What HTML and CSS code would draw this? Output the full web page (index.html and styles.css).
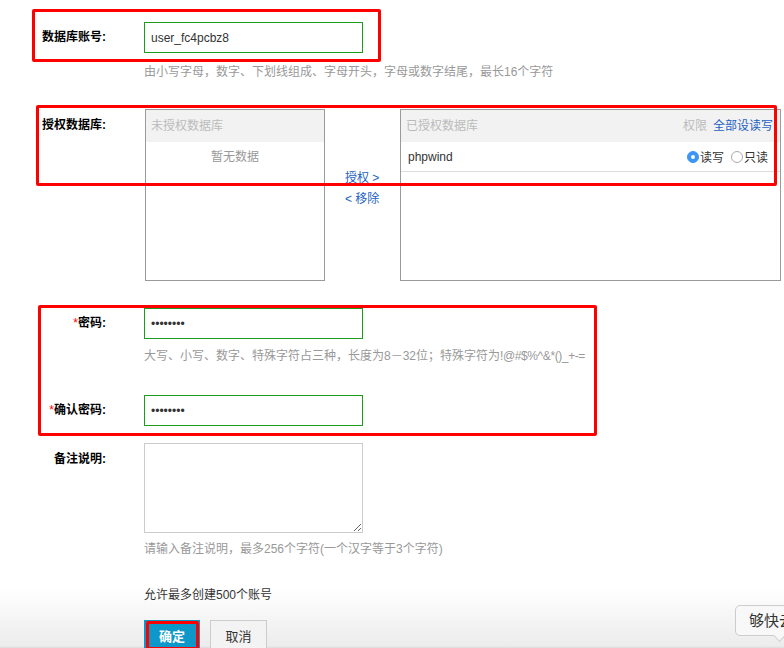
FILE: index.html
```html
<!DOCTYPE html>
<html lang="zh-CN">
<head>
<meta charset="utf-8">
<title>数据库账号</title>
<link rel="stylesheet" href="styles.css">
</head>
<body>
<div class="form">
  <div class="row r1">
    <label class="lbl">数据库账号:</label>
    <div class="field">
      <input class="txt" type="text" value="user_fc4pcbz8">
      <div class="hint">由小写字母，数字、下划线组成、字母开头，字母或数字结尾，最长16个字符</div>
    </div>
  </div>

  <div class="row r2">
    <label class="lbl lbl-db">授权数据库:</label>
    <div class="dual">
      <div class="list left">
        <div class="list-head">未授权数据库</div>
        <div class="empty">暂无数据</div>
      </div>
      <div class="mid">
        <a class="link">授权 &gt;</a>
        <a class="link">&lt; 移除</a>
      </div>
      <div class="list right">
        <div class="list-head"><span>已授权数据库</span><span class="head-right"><span>权限</span><a class="link inline">全部设读写</a></span></div>
        <div class="db-row">
          <span class="db-name">phpwind</span>
          <span class="perm"><span class="opt"><span class="radio on"></span>读写</span><span class="opt"><span class="radio"></span>只读</span></span>
        </div>
      </div>
    </div>
  </div>

  <div class="row r3">
    <label class="lbl"><span class="req">*</span>密码:</label>
    <div class="field">
      <input class="txt" type="password" value="12345678">
      <div class="hint hint-pw">大写、小写、数字、特殊字符占三种，长度为8－32位；特殊字符为<span class="sym">!@#$%^&amp;*()_+-=</span></div>
    </div>
  </div>

  <div class="row r4">
    <label class="lbl"><span class="req">*</span>确认密码:</label>
    <div class="field">
      <input class="txt" type="password" value="12345678">
    </div>
  </div>

  <div class="row r5">
    <label class="lbl lbl-note">备注说明:</label>
    <div class="field">
      <textarea class="note"></textarea>
      <div class="hint hint-note">请输入备注说明，最多256个字符(一个汉字等于3个字符)</div>
    </div>
  </div>
</div>

<div class="footer">
  <div class="limit">允许最多创建500个账号</div>
  <div class="btns">
    <button class="btn ok">确定</button>
    <button class="btn cancel">取消</button>
  </div>
</div>

<div class="tip">够快云</div>

<div class="mark m1"></div>
<div class="mark m2"></div>
<div class="mark m3"></div>
<div class="mark m4"></div>
</body>
</html>
```
FILE: styles.css
```css
html, body {
  margin: 0;
  padding: 0;
}
body {
  width: 784px;
  height: 648px;
  overflow: hidden;
  position: relative;
  background: #fff;
  font-family: "Liberation Sans", "Noto Sans CJK SC", sans-serif;
  font-size: 12px;
  color: #333;
}
.form {
  padding-top: 22px;
}
.row {
  display: flex;
  align-items: flex-start;
}
.lbl {
  flex: none;
  width: 106px;
  margin-right: 38px;
  text-align: right;
  font-weight: bold;
  color: #000;
  line-height: 31px;
  font-size: 12px;
}
.req {
  color: #f00;
  font-weight: normal;
}
.field {
  display: flex;
  flex-direction: column;
}
.txt {
  display: block;
  width: 219px;
  height: 31px;
  box-sizing: border-box;
  margin: 0;
  padding: 0 6px;
  border: 1px solid #1c9c1c;
  outline: none;
  font: 12px "Liberation Sans", "Noto Sans CJK SC", sans-serif;
  color: #333;
  background: #fff;
}
.hint {
  color: #999;
  line-height: 18px;
  margin-top: 10px;
  white-space: nowrap;
}
.r2 {
  margin-top: 28px;
}
.lbl-db {
  line-height: 33px;
}
.dual {
  display: flex;
  margin-left: 1px;
}
.list {
  box-sizing: border-box;
  height: 172px;
  border: 1px solid #9a9a9a;
}
.list.left {
  width: 180px;
}
.list.right {
  width: 381px;
}
.list-head {
  height: 32px;
  line-height: 32px;
  background: #f2f2f2;
  color: #bbb;
  padding: 0 6px 0 5px;
  display: flex;
  justify-content: space-between;
  white-space: nowrap;
}
.list.right .list-head {
  padding-right: 7px;
}
.head-right {
  display: flex;
  gap: 6px;
}
.empty {
  text-align: center;
  color: #999;
  line-height: 30px;
}
.mid {
  width: 75px;
  box-sizing: border-box;
  padding: 59px 0 0 20px;
  display: flex;
  flex-direction: column;
}
.link {
  color: #1d5fc2;
  line-height: 21px;
  cursor: pointer;
  text-decoration: none;
}
.link.inline {
  line-height: 32px;
}
.db-row {
  height: 29px;
  border-bottom: 1px solid #ddd;
  display: flex;
  align-items: center;
  justify-content: space-between;
  padding: 0 12px 0 7px;
  color: #333;
}
.db-name {
  font-size: 12px;
}
.perm {
  display: flex;
  align-items: center;
  gap: 7px;
  white-space: nowrap;
}
.opt {
  display: flex;
  align-items: center;
}
.radio {
  display: inline-block;
  width: 12px;
  height: 12px;
  box-sizing: border-box;
  border-radius: 50%;
  border: 1px solid #aaa;
  background: #fff;
  position: relative;
  margin-right: 1px;
}
.radio.on {
  background: #3b95f5;
  border-color: #3b95f5;
}
.radio.on::after {
  content: "";
  position: absolute;
  left: 3px;
  top: 3px;
  width: 4px;
  height: 4px;
  border-radius: 50%;
  background: #fff;
}
.r3 {
  margin-top: 27px;
}
.hint-pw {
  margin-top: 8px;
}
.sym {
  letter-spacing: -0.4px;
}
.r4 {
  margin-top: 30px;
}
.r5 {
  margin-top: 17px;
}
.lbl-note {
  line-height: 32px;
}
.note {
  display: block;
  width: 219px;
  height: 90px;
  box-sizing: border-box;
  margin: 0;
  border: 1px solid #ccc;
  resize: both;
  outline: none;
  font: 12px "Liberation Sans", "Noto Sans CJK SC", sans-serif;
}
.hint-note {
  margin-top: 7px;
}
.footer {
  height: 90px;
  box-sizing: border-box;
  padding: 28px 0 0 144px;
  background: linear-gradient(to bottom, #fff 0, #fff 30px, #ececec 88px, #dcdcdc 90px);
}
.limit {
  line-height: 18px;
  color: #333;
}
.btns {
  display: flex;
  margin-top: 16px;
}
.btn {
  height: 30px;
  box-sizing: border-box;
  padding: 0;
  margin: 0;
  font: 13px "Liberation Sans", "Noto Sans CJK SC", sans-serif;
  cursor: pointer;
}
.btn.ok {
  width: 56px;
  background: #0e97c9;
  border: 1px solid #0e97c9;
  color: #fff;
  font-weight: bold;
}
.btn.cancel {
  width: 57px;
  margin-left: 10px;
  background: #f3f3f3;
  border: 1px solid #ccc;
  color: #333;
}
.tip {
  position: absolute;
  left: 735px;
  top: 605px;
  width: 70px;
  height: 31px;
  box-sizing: border-box;
  padding-left: 13px;
  line-height: 29px;
  border: 1px solid #ccc;
  border-radius: 5px;
  background: #f8f8f8;
  font-size: 15px;
  color: #333;
  white-space: nowrap;
}
.tip::after {
  content: "";
  position: absolute;
  left: 39px;
  bottom: -5px;
  width: 8px;
  height: 8px;
  background: #f8f8f8;
  border-right: 1px solid #ccc;
  border-bottom: 1px solid #ccc;
  transform: rotate(45deg);
}
.mark {
  position: absolute;
  box-sizing: border-box;
  border: 3px solid #f00;
  border-radius: 2px;
  pointer-events: none;
}
.m1 {
  left: 32px;
  top: 9px;
  width: 349px;
  height: 53px;
}
.m2 {
  left: 36px;
  top: 105px;
  width: 741px;
  height: 81px;
}
.m3 {
  left: 38px;
  top: 305px;
  width: 559px;
  height: 131px;
}
.m4 {
  left: 146px;
  top: 621px;
  width: 53px;
  height: 29px;
}
```
